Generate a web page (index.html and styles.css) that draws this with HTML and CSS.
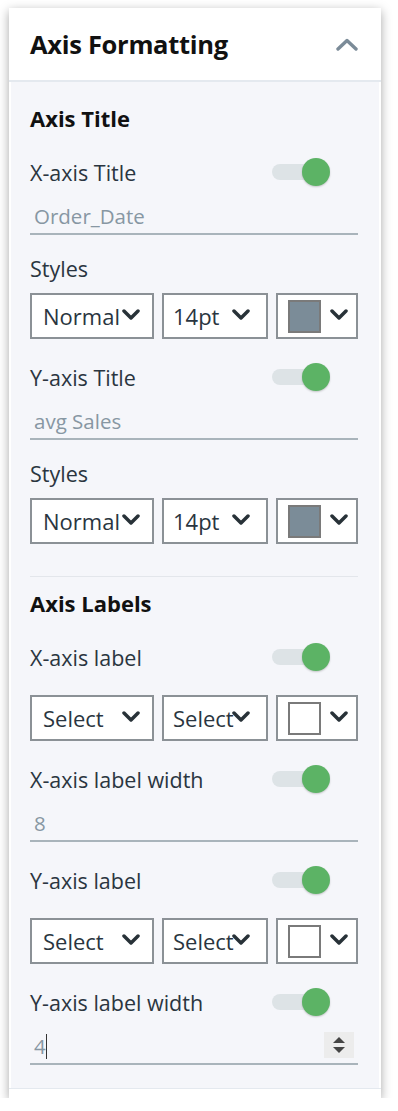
FILE: index.html
```html
<!DOCTYPE html>
<html lang="en">
<head>
    <meta charset="UTF-8">
    <meta name="viewport" content="width=device-width, initial-scale=1.0">
    <title>Axis Formatting</title>
    <link rel="stylesheet" href="styles.css">
</head>
<body>
    <div class="panel">
        <div class="panel-header">
            <h2>Axis Formatting</h2>
            <svg class="collapse-icon" width="22" height="13" viewBox="0 0 22 13">
                <path d="M2 11 L11 2.5 L20 11" fill="none" stroke="#7b8b98" stroke-width="3.4" stroke-linecap="round" stroke-linejoin="round"/>
            </svg>
        </div>
        <div class="panel-body">
            <h3>Axis Title</h3>
            <div class="switch-row">
                <span>X-axis Title</span>
                <span class="toggle"></span>
            </div>
            <input type="text" class="text-input" placeholder="Order_Date">
            <div class="field-label">Styles</div>
            <div class="select-row">
                <div class="select select-wide"><span>Normal</span><svg class="chevron" viewBox="0 0 18 11"><path d="M2 2 L9 9 L16 2"/></svg></div>
                <div class="select select-mid"><span>14pt</span><svg class="chevron" viewBox="0 0 18 11"><path d="M2 2 L9 9 L16 2"/></svg></div>
                <div class="select select-color"><span class="swatch filled"></span><svg class="chevron" viewBox="0 0 18 11"><path d="M2 2 L9 9 L16 2"/></svg></div>
            </div>
            <div class="switch-row">
                <span>Y-axis Title</span>
                <span class="toggle"></span>
            </div>
            <input type="text" class="text-input" placeholder="avg Sales">
            <div class="field-label">Styles</div>
            <div class="select-row">
                <div class="select select-wide"><span>Normal</span><svg class="chevron" viewBox="0 0 18 11"><path d="M2 2 L9 9 L16 2"/></svg></div>
                <div class="select select-mid"><span>14pt</span><svg class="chevron" viewBox="0 0 18 11"><path d="M2 2 L9 9 L16 2"/></svg></div>
                <div class="select select-color"><span class="swatch filled"></span><svg class="chevron" viewBox="0 0 18 11"><path d="M2 2 L9 9 L16 2"/></svg></div>
            </div>

            <div class="divider"></div>

            <h3 class="after-divider">Axis Labels</h3>
            <div class="switch-row">
                <span>X-axis label</span>
                <span class="toggle"></span>
            </div>
            <div class="select-row spaced">
                <div class="select select-wide"><span>Select</span><svg class="chevron" viewBox="0 0 18 11"><path d="M2 2 L9 9 L16 2"/></svg></div>
                <div class="select select-mid"><span>Select</span><svg class="chevron" viewBox="0 0 18 11"><path d="M2 2 L9 9 L16 2"/></svg></div>
                <div class="select select-color"><span class="swatch"></span><svg class="chevron" viewBox="0 0 18 11"><path d="M2 2 L9 9 L16 2"/></svg></div>
            </div>
            <div class="switch-row">
                <span>X-axis label width</span>
                <span class="toggle"></span>
            </div>
            <input type="text" class="text-input" placeholder="8">
            <div class="switch-row">
                <span>Y-axis label</span>
                <span class="toggle"></span>
            </div>
            <div class="select-row spaced">
                <div class="select select-wide"><span>Select</span><svg class="chevron" viewBox="0 0 18 11"><path d="M2 2 L9 9 L16 2"/></svg></div>
                <div class="select select-mid"><span>Select</span><svg class="chevron" viewBox="0 0 18 11"><path d="M2 2 L9 9 L16 2"/></svg></div>
                <div class="select select-color"><span class="swatch"></span><svg class="chevron" viewBox="0 0 18 11"><path d="M2 2 L9 9 L16 2"/></svg></div>
            </div>
            <div class="switch-row">
                <span>Y-axis label width</span>
                <span class="toggle"></span>
            </div>
            <div class="number-input">
                <span class="number-value">4</span><span class="caret"></span>
                <span class="spinner">
                    <svg width="14" height="20" viewBox="0 0 14 20">
                        <path d="M7 2 L13 8 L1 8 Z" fill="#454545"/>
                        <path d="M1 12 L13 12 L7 18 Z" fill="#454545"/>
                    </svg>
                </span>
            </div>
        </div>
        <div class="panel-footer"></div>
    </div>
</body>
</html>
```

FILE: styles.css
```css
body {
    margin: 0;
    padding: 8px 0 0 9px;
    background-color: #ffffff;
    font-family: 'Open Sans', sans-serif;
    color: #2a3540;
}
.panel {
    width: 372px;
    background-color: white;
    box-shadow: 0 3px 10px rgba(0,0,0,0.35);
}
.panel-header {
    height: 72px;
    padding: 0 23px 0 21px;
    display: flex;
    justify-content: space-between;
    align-items: center;
    border-bottom: 2px solid #e4e9ef;
}
.panel-header h2 {
    margin: 0;
    font-size: 25.5px;
    font-weight: 700;
    color: #111;
    letter-spacing: -0.3px;
}
.collapse-icon {
    display: block;
    margin-top: 1px;
}
.panel-body {
    margin: 0 2px;
    padding: 22px 21px 23px 19px;
    background-color: #f5f6fa;
    display: flex;
    flex-direction: column;
}
h3 {
    margin: 0;
    height: 28px;
    line-height: 28px;
    font-size: 22px;
    font-weight: 700;
    color: #111;
}
h3.after-divider {
    margin-top: 12px;
}
.switch-row {
    height: 30px;
    margin-top: 23px;
    padding-right: 28px;
    display: flex;
    justify-content: space-between;
    align-items: center;
    font-size: 21.5px;
}
h3 + .switch-row {
    margin-top: 25px;
}
.toggle {
    position: relative;
    width: 58px;
    height: 28px;
}
.toggle::before {
    content: '';
    position: absolute;
    left: 0;
    top: 6px;
    width: 54px;
    height: 16px;
    border-radius: 8px;
    background-color: #dde3e6;
}
.toggle::after {
    content: '';
    position: absolute;
    right: 0;
    top: 0;
    width: 28px;
    height: 28px;
    border-radius: 50%;
    background-color: #5cb365;
    box-shadow: 0 1px 2px rgba(0,0,0,0.2);
}
.text-input {
    box-sizing: border-box;
    height: 36px;
    margin-top: 12px;
    padding: 0 0 0 4px;
    border: none;
    border-bottom: 2px solid #a9b4bb;
    background: transparent;
    font-family: inherit;
    font-size: 20.5px;
    outline: none;
}
.text-input::placeholder {
    color: #8797a3;
}
.field-label {
    height: 30px;
    line-height: 30px;
    margin-top: 19px;
    font-size: 21.5px;
}
.select-row {
    margin-top: 9px;
    display: grid;
    grid-template-columns: 124px 106px 1fr;
    gap: 8px;
}
.select-row.spaced {
    margin-top: 23px;
}
.select {
    position: relative;
    box-sizing: border-box;
    height: 46px;
    padding-left: 11px;
    border: 2px solid #8b9196;
    background-color: white;
    display: flex;
    align-items: center;
    overflow: hidden;
    white-space: nowrap;
    font-size: 22px;
}
.select-mid {
    padding-left: 9px;
}
.select-color {
    padding-left: 10px;
}
.chevron {
    position: absolute;
    top: 14px;
    width: 18px;
    height: 11px;
    fill: none;
    stroke: #283238;
    stroke-width: 3.5;
    stroke-linecap: round;
    stroke-linejoin: round;
}
.select-wide .chevron {
    right: 12px;
}
.select-mid .chevron {
    right: 16px;
}
.select-color .chevron {
    right: 8px;
}
.swatch {
    box-sizing: border-box;
    width: 33px;
    height: 33px;
    border: 2px solid #7a7a7a;
    background-color: white;
}
.swatch.filled {
    background-color: #7b8c98;
}
.divider {
    height: 1px;
    margin-top: 32px;
    background-color: #e3e6eb;
}
.number-input {
    position: relative;
    box-sizing: border-box;
    height: 36px;
    margin-top: 12px;
    padding-left: 4px;
    border-bottom: 2px solid #a9b4bb;
    display: flex;
    align-items: center;
    font-size: 20.5px;
}
.number-value {
    color: #8797a3;
}
.caret {
    width: 1px;
    height: 25px;
    background-color: #333;
}
.spinner {
    position: absolute;
    right: 4px;
    top: 3px;
    width: 30px;
    height: 26px;
    background-color: #ececec;
    display: flex;
    justify-content: center;
    align-items: center;
}
.spinner svg {
    display: block;
}
.panel-footer {
    height: 9px;
    border-top: 1px solid #e4e9ef;
    background-color: white;
}
```
